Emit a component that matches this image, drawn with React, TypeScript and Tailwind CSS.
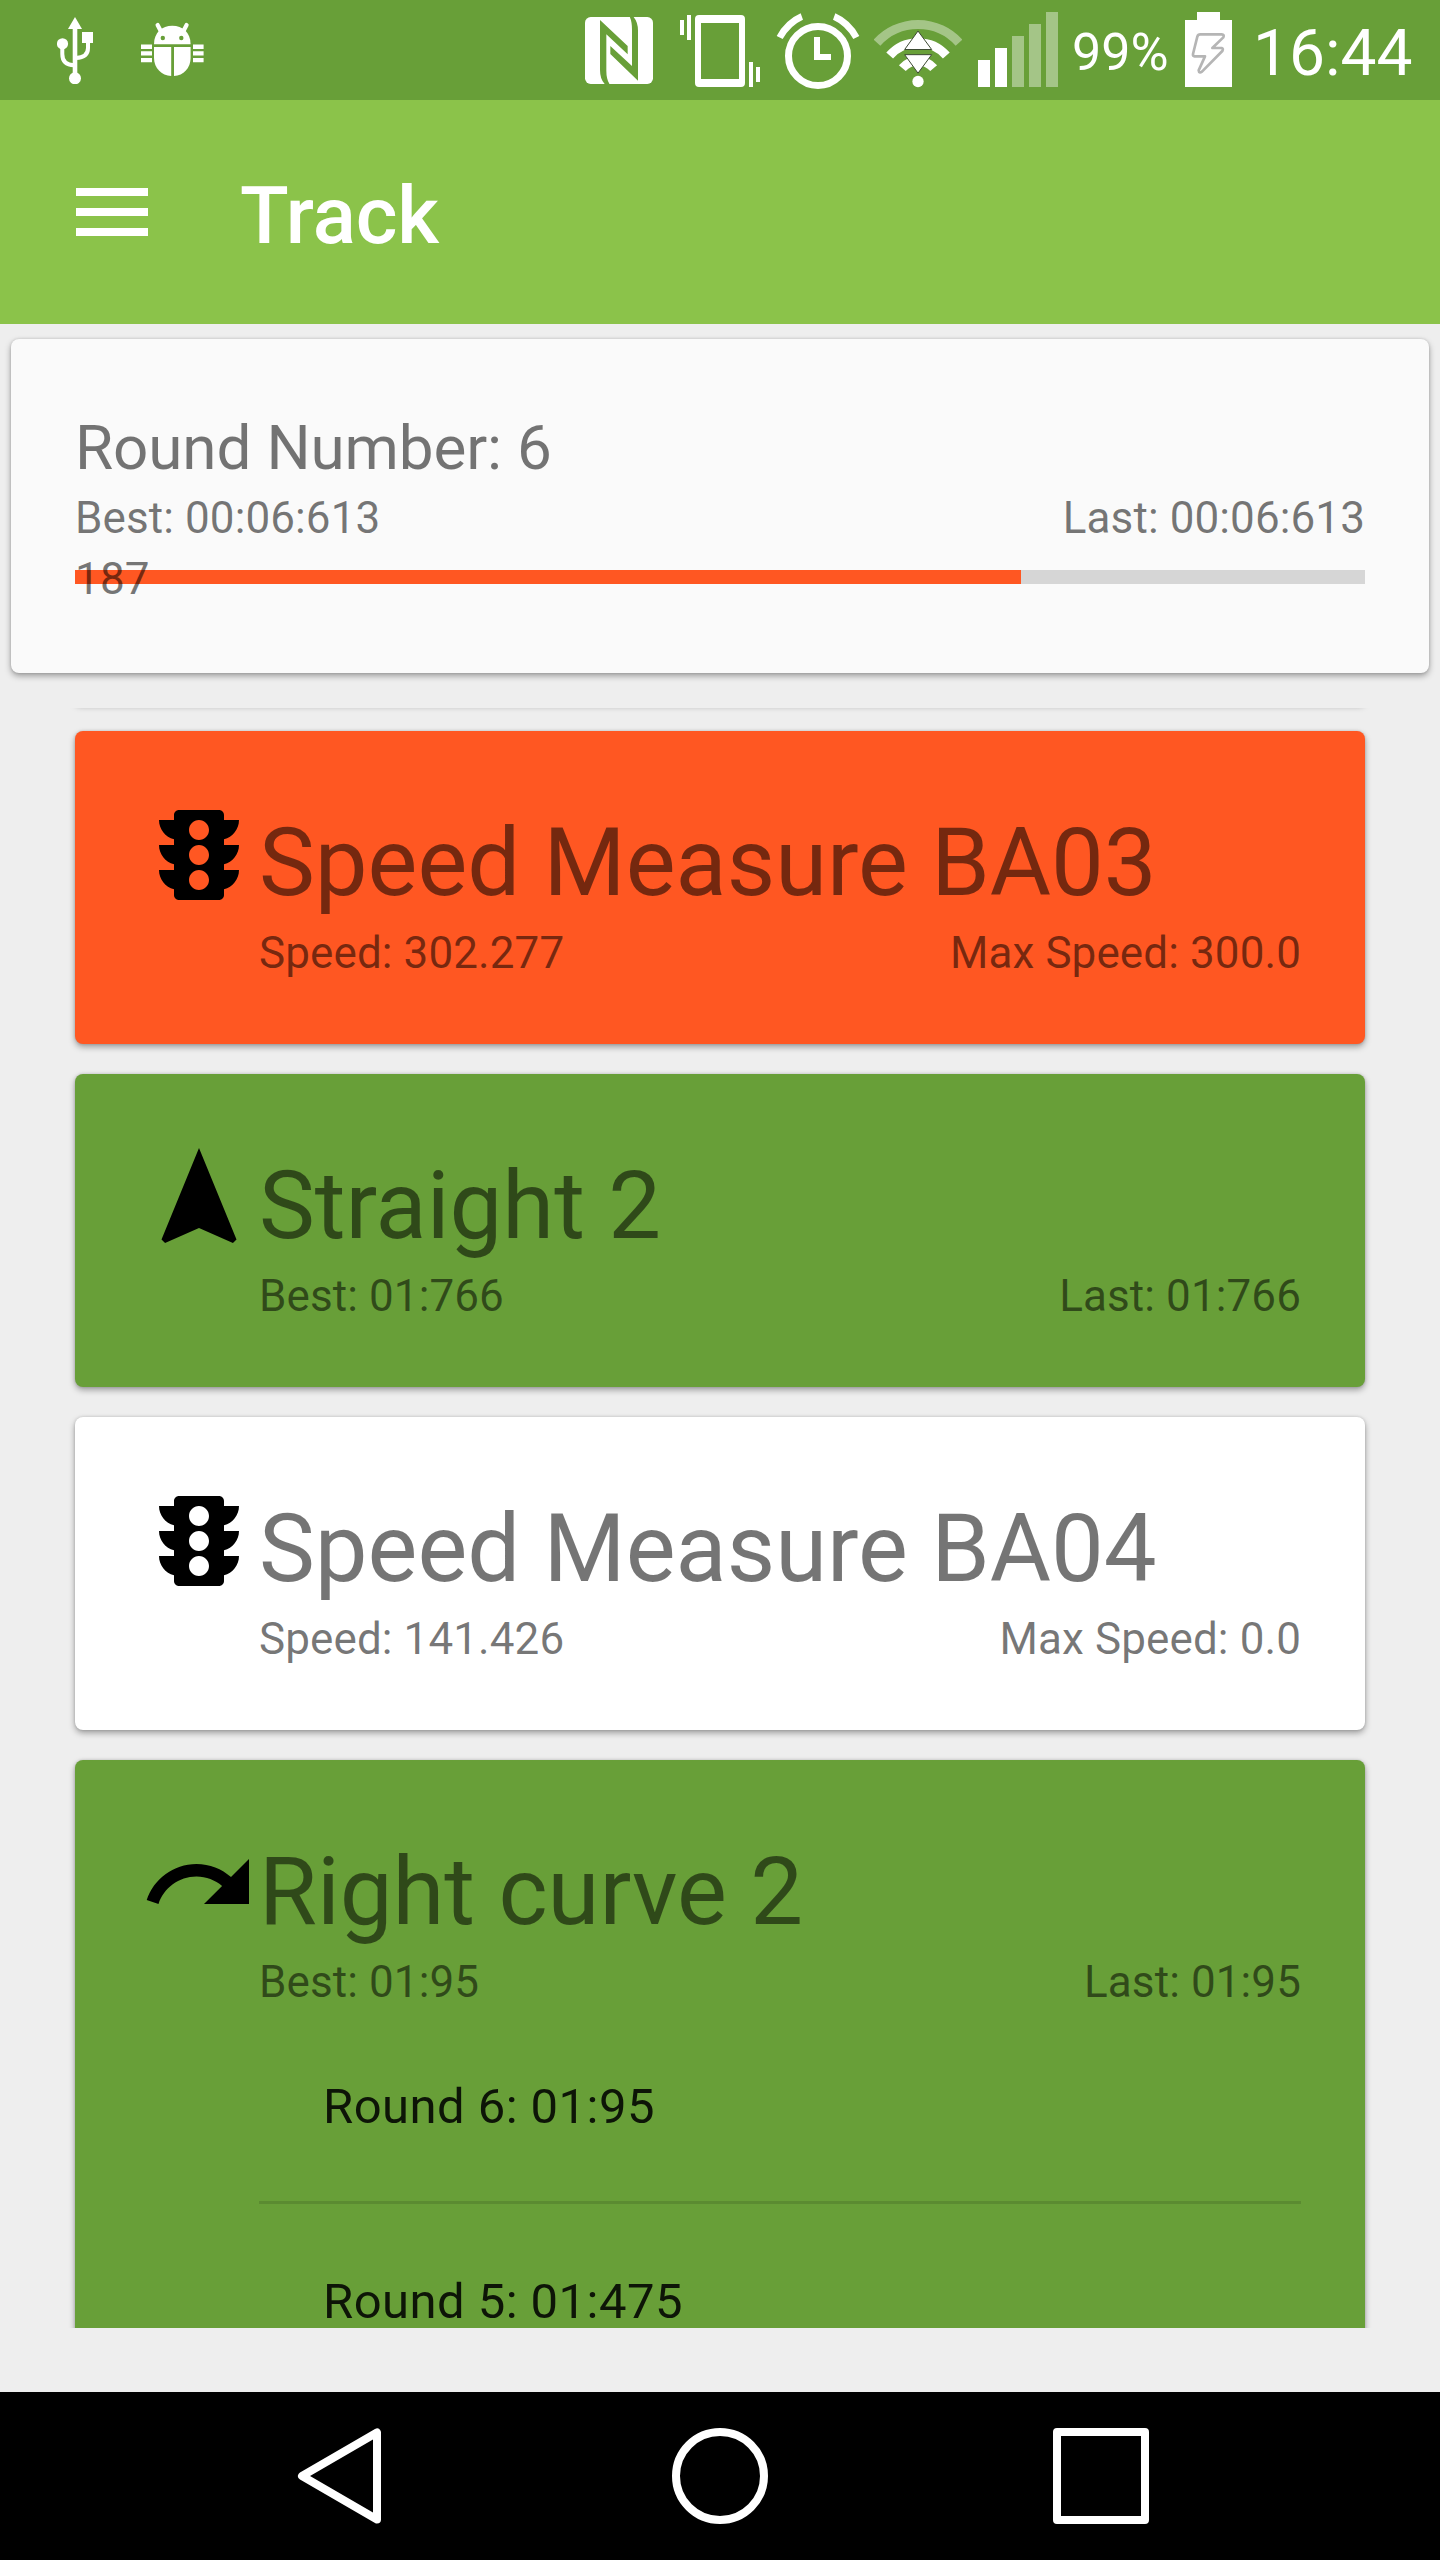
import React from "react";

const CARD_SHADOW =
  "shadow-[0_3px_6px_rgba(0,0,0,0.34),0_0_3px_rgba(0,0,0,0.14)] rounded-[8px]";

function UsbIcon() {
  return (
    <svg className="ml-[57px] mt-[17px] shrink-0" width="36" height="67" viewBox="57 17 36 67" fill="none">
      <path d="M75 17L82 29H68Z" fill="#fff" />
      <path d="M75 27V76" stroke="#fff" strokeWidth="4.6" />
      <path d="M62.3 46V54Q62.3 65 74 65.2" stroke="#fff" strokeWidth="4" />
      <path d="M88 42V48Q88 57.500 76 58" stroke="#fff" strokeWidth="4" />
      <circle cx="62.500" cy="43.800" r="5.600" fill="#fff" />
      <rect x="82" y="32" width="11" height="11" fill="#fff" />
      <circle cx="75" cy="78.300" r="6" fill="#fff" />
    </svg>
  );
}

function DebugIcon() {
  return (
    <svg className="ml-[48px] mt-[22px] shrink-0" width="63" height="56" viewBox="141 22 63 56" fill="#fff">
      <path d="M157.600 25L161 31.500M186.600 25L183.200 31.500" stroke="#fff" strokeWidth="4.200" strokeLinecap="round" />
      <path d="M154 44.300C154 32.500 162 25.800 172.300 25.800S190.600 32.500 190.600 44.300Z" />
      <circle cx="162.800" cy="38" r="2.200" fill="#689f38" />
      <circle cx="181.300" cy="38" r="2.200" fill="#689f38" />
      <path d="M154 47H171.200V76C161.500 75.500 154 68 154 58Z" />
      <path d="M174 47H190.600V58C190.600 68 183.500 75.500 174 76Z" />
      <path d="M141 44.500H152V49H141ZM141 51.200H152V55.500H141ZM141 58H152V62.300H141ZM193 44.500H203.600V49H193ZM193 51.200H203.600V55.500H193ZM193 58H203.600V62.300H193Z" />
    </svg>
  );
}

function NfcIcon() {
  return (
    <svg className="ml-auto mt-[17px] shrink-0" width="68" height="67" viewBox="12 21 204 201">
      <rect x="12" y="21" width="204" height="201" rx="17" fill="#fff" />
      <path
        fill="#689f38"
        d="M57 30L140 108V133L76 73V182Q76 208 86 223H72Q57 208 57 180ZM171 212L88 132V108L153 168V60Q153 34 146 20H157Q171 36 171 62Z"
      />
    </svg>
  );
}

function VibrateIcon() {
  return (
    <svg className="ml-[27px] mt-[15px] shrink-0" width="80" height="72" viewBox="357 45 240 216" fill="#fff">
      <path d="M357 60h12v45h-12zM378 45h12v75h-12zM564 186h12v75h-12zM585 201h12v45h-12z" />
      <path fillRule="evenodd" d="M414 45h126q12 0 12 12v192q0 12-12 12H414q-12 0-12-12V57q0-12 12-12zm6 24v168h114V69z" />
    </svg>
  );
}

function AlarmIcon() {
  return (
    <svg className="ml-[16px] mt-[13px] shrink-0" width="84" height="77" viewBox="648 39 252 231" fill="#fff">
      <circle cx="774" cy="168" r="88.500" fill="none" stroke="#fff" strokeWidth="21" />
      <path d="M762 111h18v51h33v18h-51zM650 108Q676 60 722 40L729 59Q691 76 668 117ZM898 108Q872 60 826 40L819 59Q857 76 880 117Z" />
    </svg>
  );
}

function WifiIcon() {
  return (
    <svg className="ml-[14px] mt-[19px] shrink-0" width="88" height="69" viewBox="942 57 264 207" fill="none">
      <g stroke="#fff" strokeWidth="27">
        <path d="M951 128A166 166 0 0 1 1197 128" strokeOpacity="0.4" />
        <path d="M989 166.500A113 113 0 0 1 1159 166.500" />
        <path d="M1027 204.500A62 62 0 0 1 1121 204.500" />
      </g>
      <circle cx="1074" cy="244.500" r="17" fill="#fff" />
      <path d="M1074 93L1115 148.500H1034ZM1034 164H1115L1074 219.500Z" fill="#fff" stroke="#3d4a33" strokeWidth="3" />
    </svg>
  );
}

function SignalIcon() {
  return (
    <svg className="ml-[16px] mt-[12px] shrink-0" width="80" height="75" viewBox="54 36 240 225" fill="#fff">
      <path d="M54 180h36v81H54zM105 144h36v117h-36z" />
      <path fillOpacity="0.4" d="M156 108h36v153h-36zM207 72h36v189h-36zM258 36h36v225h-36z" />
    </svg>
  );
}

function BatteryIcon() {
  return (
    <svg className="ml-[16px] mt-[12px] shrink-0" width="47" height="75" viewBox="675 36 141 225">
      <path fill="#fff" d="M711 36h69v24h36v201H675V60h36z" />
      <path
        fill="none"
        stroke="#b5b5b5"
        strokeWidth="8"
        strokeLinejoin="round"
        d="M721 103H785Q794 104 790 112L757 144H785Q791 146 787 153L726 215Q717 221 716 211L735 169H704Q698 168 699 162L712 110Q714 103 721 103Z"
      />
    </svg>
  );
}

const ICONS = {
  light:
    "M20 10h-3V8.860c1.720-.45 3-2 3-3.860h-3V4c0-.55-.45-1-1-1H8c-.55 0-1 .45-1 1v1H4c0 1.860 1.280 3.410 3 3.860V10H4c0 1.860 1.280 3.410 3 3.860V15H4c0 1.860 1.280 3.410 3 3.860V20c0 .55.45 1 1 1h8c.55 0 1-.45 1-1v-1.140c1.720-.45 3-2 3-3.860h-3v-1.140c1.720-.45 3-2 3-3.860zm-8 9c-1.110 0-2-.9-2-2s.89-2 2-2c1.100 0 2 .9 2 2s-.89 2-2 2zm0-5c-1.110 0-2-.9-2-2s.89-2 2-2c1.100 0 2 .9 2 2s-.89 2-2 2zm0-5c-1.110 0-2-.9-2-2 0-1.110.89-2 2-2 1.100 0 2 .89 2 2 0 1.100-.89 2-2 2z",
  straight: "M12 2L4.500 20.290l.71.71L12 18l6.790 3 .71-.71z",
  curve:
    "M18.400 10.600C16.550 8.990 14.150 8 11.500 8c-4.650 0-8.580 3.030-9.960 7.220L3.900 16c1.050-3.190 4.050-5.500 7.600-5.500 1.950 0 3.730.72 5.120 1.880L13 16h9V7l-3.600 3.600z",
};

type Section = {
  icon: keyof typeof ICONS;
  color: string;
  title: string;
  left: string;
  right: string;
  rounds?: string[];
};

const SECTIONS: Section[] = [
  { icon: "light", color: "bg-[#ff5722]", title: "Speed Measure BA03", left: "Speed: 302.277", right: "Max Speed: 300.0" },
  { icon: "straight", color: "bg-[#689f38]", title: "Straight 2", left: "Best: 01:766", right: "Last: 01:766" },
  { icon: "light", color: "bg-white", title: "Speed Measure BA04", left: "Speed: 141.426", right: "Max Speed: 0.0" },
  {
    icon: "curve",
    color: "bg-[#689f38]",
    title: "Right curve 2",
    left: "Best: 01:95",
    right: "Last: 01:95",
    rounds: ["Round 6: 01:95", "Round 5: 01:475"],
  },
];

function SectionCard({ icon, color, title, left, right, rounds }: Section) {
  return (
    <section className={`flex min-h-[313px] shrink-0 p-[64px] ${color} ${CARD_SHADOW}`}>
      <svg className="shrink-0" width="120" height="120" viewBox="0 0 24 24">
        <path d={ICONS[icon]} />
      </svg>
      <div className="min-w-0 flex-1 text-black/54">
        <h2 className="whitespace-nowrap text-[94px] leading-[136px]">{title}</h2>
        <div className="flex justify-between text-[44px] leading-[44px] tracking-[0.1px]">
          <span>{left}</span>
          <span>{right}</span>
        </div>
        {rounds && (
          <ul className="mt-[5px] divide-y-3 divide-black/12 text-[49px] tracking-[0.45px]">
            {rounds.map((r) => (
              <li key={r} className="h-[195px] pl-[64px] leading-[196px]">
                <span className="text-black/87">{r}</span>
              </li>
            ))}
          </ul>
        )}
      </div>
    </section>
  );
}

export default function App() {
  return (
    <div className="flex h-[2560px] w-[1440px] flex-col overflow-hidden bg-[#eeeeee] font-['Roboto',sans-serif]">
      <div className="flex h-[100px] shrink-0 items-start overflow-hidden bg-[#689f38] text-white">
        <UsbIcon />
        <DebugIcon />
        <NfcIcon />
        <VibrateIcon />
        <AlarmIcon />
        <WifiIcon />
        <SignalIcon />
        <span className="ml-[14px] w-[97px] text-[52px] leading-[105px]">99%</span>
        <BatteryIcon />
        <span className="ml-[21px] w-[187px] text-[64px] leading-[107px]">16:44</span>
      </div>

      <header className="flex h-[224px] shrink-0 items-start overflow-hidden bg-[#8bc34a] text-white">
        <div className="ml-[76px] mt-[88px] flex w-[72px] flex-col gap-[12px]">
          <div className="h-[8px] bg-white" />
          <div className="h-[8px] bg-white" />
          <div className="h-[8px] bg-white" />
        </div>
        <h1 className="ml-[92px] text-[80px] font-medium leading-[232px] tracking-[-0.1px]">Track</h1>
      </header>

      <section className={`mx-[11px] mt-[15px] h-[334px] shrink-0 bg-[#fafafa] p-[64px] text-black/54 ${CARD_SHADOW}`}>
        <h2 className="text-[62px] leading-[90px] tracking-[-0.15px]">Round Number: 6</h2>
        <div className="flex justify-between text-[44px] leading-[50px] tracking-[0.1px]">
          <span>Best: 00:06:613</span>
          <span>Last: 00:06:613</span>
        </div>
        <div className="relative mt-[27px] h-[14px] bg-[#d6d6d6]">
          <div className="h-full w-[946px] bg-[#ff5722]" />
          <span className="absolute left-0 top-[-17px] text-[44px] leading-[52px] tracking-[0.2px]">187</span>
        </div>
      </section>

      <main className="mt-[35px] flex h-[1620px] shrink-0 flex-col gap-[30px] overflow-hidden px-[75px]">
        <div className={`-mb-[2px] -mt-[15px] h-[10px] shrink-0 bg-white ${CARD_SHADOW}`} />
        {SECTIONS.map((s) => (
          <SectionCard key={s.title} {...s} />
        ))}
      </main>

      <nav className="mt-auto flex h-[168px] shrink-0 items-center bg-black pl-[297px]">
        <svg width="84" height="96" viewBox="0 0 84 96" fill="none" stroke="#fff" strokeWidth="8" strokeLinejoin="round">
          <path d="M80 4.500V91.500L5 48Z" />
        </svg>
        <svg className="ml-[291px]" width="96" height="96" viewBox="0 0 96 96" fill="none" stroke="#fff" strokeWidth="8">
          <circle cx="48" cy="48" r="44" />
        </svg>
        <div className="ml-[285px] size-[96px] rounded-[4px] border-8 border-white" />
      </nav>
    </div>
  );
}
